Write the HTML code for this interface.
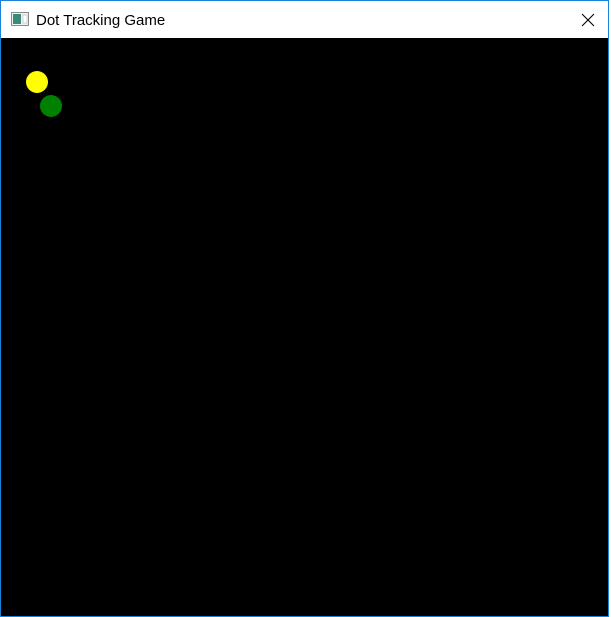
<!DOCTYPE html>
<html><head><style>
html,body{margin:0;padding:0;width:611px;height:617px;background:#fff;overflow:hidden}
.win{position:absolute;left:0;top:0;width:607px;height:615px;border:1px solid #1883d7;background:#fff}
.title{position:absolute;left:35px;top:11px;font:15px "Liberation Sans",sans-serif;color:#000}
.game{position:absolute;left:0;top:37px;width:607px;height:578px;background:#000}
.dot{position:absolute;width:22px;height:22px;border-radius:50%}
</style></head><body>
<div class="win">
<svg style="position:absolute;left:10px;top:11px" width="18" height="14">
<rect x="0.5" y="0.5" width="17" height="13" fill="#f0f0f0" stroke="#8a8a8a"/>
<rect x="2" y="2" width="8" height="10" fill="#3a8a7a"/>
<rect x="12" y="3" width="4" height="8" fill="#ffffff" stroke="#aaa" stroke-width="0.5"/>
</svg>
<div class="title">Dot Tracking Game</div>
<svg style="position:absolute;left:580px;top:12px" width="14" height="14">
<path d="M1 1L13 13M13 1L1 13" stroke="#000" stroke-width="1.1"/>
</svg>
<div class="game">
<div class="dot" style="left:25px;top:33px;background:#ffff00"></div>
<div class="dot" style="left:39px;top:57px;background:#008000"></div>
</div>
</div>
</body></html>
